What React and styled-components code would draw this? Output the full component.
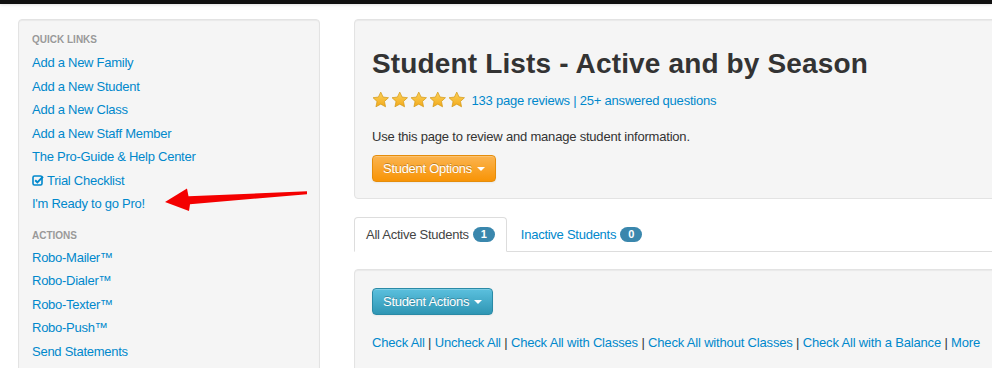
import React from "react";
import styled, { createGlobalStyle } from "styled-components";

const GlobalStyle = createGlobalStyle`
  html, body { margin: 0; padding: 0; background: #fff; overflow: hidden; }
  body {
    font-family: "Liberation Sans", Arial, Helvetica, sans-serif;
    font-size: 13px;
    color: #333;
  }
  * { box-sizing: border-box; }
`;

const Page = styled.div`
  position: relative;
  width: 992px;
  height: 368px;
  overflow: hidden;
`;

const TopBar = styled.div`
  height: 4px;
  background: #111;
  box-shadow: 0 1px 3px rgba(0, 0, 0, 0.12);
`;

const Layout = styled.div`
  display: flex;
  align-items: flex-start;
  gap: 34px;
  width: 1300px;
  padding: 15px 0 0 18px;
`;

const Well = styled.div`
  background: #f5f5f5;
  border: 1px solid #e3e3e3;
  border-radius: 4px;
  box-shadow: inset 0 1px 1px rgba(0, 0, 0, 0.05);
`;

const Sidebar = styled(Well)`
  width: 302px;
  height: 400px;
  padding: 10px 13px 0;
`;

const NavHeader = styled.div`
  font-size: 10px;
  font-weight: bold;
  line-height: 20px;
  color: #999;
  text-transform: uppercase;
  text-shadow: 0 1px 0 rgba(255, 255, 255, 0.5);
  margin-top: ${(p) => (p.$first ? "0" : "10px")};
  margin-bottom: ${(p) => (p.$first ? "1px" : "0")};
`;

const SideLink = styled.a`
  display: flex;
  align-items: center;
  gap: 3px;
  height: 23.5px;
  color: #0088cc;
  text-decoration: none;
  letter-spacing: -0.26px;
  font-size: 13px;
`;

const Main = styled.div`
  width: 940px;
  display: flex;
  flex-direction: column;
`;

const HeroWell = styled(Well)`
  padding: 19px 17px 16px;
`;

const Title = styled.h1`
  margin: 9px 0 0;
  font-size: 28px;
  line-height: 31px;
  font-weight: bold;
  color: #333;
  letter-spacing: 0.15px;
`;

const ReviewRow = styled.div`
  display: flex;
  align-items: center;
  height: 20px;
  margin-top: 11px;
  gap: 6px;
  letter-spacing: -0.22px;
`;

const Stars = styled.div`
  display: flex;
  gap: 1.5px;
`;

const Link = styled.a`
  color: #0088cc;
  text-decoration: none;
`;

const Description = styled.p`
  margin: 17px 0 0;
  line-height: 20px;
  letter-spacing: -0.2px;
`;

const Button = styled.button`
  display: inline-flex;
  align-items: center;
  gap: 5px;
  height: 27px;
  padding: 0 10px;
  margin-top: ${(p) => p.$mt || "0"};
  font-family: inherit;
  font-size: 13px;
  letter-spacing: -0.28px;
  color: #fff;
  text-shadow: 0 -1px 0 rgba(0, 0, 0, 0.25);
  border-radius: 4px;
  border: 1px solid ${(p) => (p.$variant === "info" ? "#2a8aa6" : "#e58d0b")};
  background: ${(p) =>
    p.$variant === "info"
      ? "linear-gradient(to bottom, #5bc0de, #2f96b4)"
      : "linear-gradient(to bottom, #fbb450, #f89406)"};
  box-shadow: inset 0 1px 0 rgba(255, 255, 255, 0.2), 0 1px 2px rgba(0, 0, 0, 0.05);
  align-self: flex-start;
`;

const Caret = styled.span`
  width: 0;
  height: 0;
  border-top: 4px solid #fff;
  border-left: 4px solid transparent;
  border-right: 4px solid transparent;
  margin-top: 1px;
`;

const Tabs = styled.ul`
  display: flex;
  list-style: none;
  margin: 18px 0 0;
  padding: 0;
  border-bottom: 1px solid #ddd;
`;

const Tab = styled.li`
  margin-bottom: -1px;
  margin-right: 2px;
`;

const TabLink = styled.a`
  display: flex;
  align-items: center;
  gap: 4px;
  padding: 8px 11px 8px 11px;
  line-height: 17px;
  border: 1px solid ${(p) => (p.$active ? "#ddd" : "transparent")};
  border-bottom-color: ${(p) => (p.$active ? "#fff" : "transparent")};
  border-radius: 4px 4px 0 0;
  background: ${(p) => (p.$active ? "#fff" : "transparent")};
  color: ${(p) => (p.$active ? "#444" : "#0088cc")};
  text-decoration: none;
  letter-spacing: -0.26px;
`;

const Badge = styled.span`
  display: inline-block;
  padding: 0 8px;
  line-height: 15px;
  border-radius: 9px;
  background: #3a87ad;
  color: #fff;
  font-size: 11px;
  font-weight: bold;
  letter-spacing: 0;
`;

const ListWell = styled(Well)`
  margin-top: 17px;
  height: 120px;
  padding: 18px 17px;
  display: flex;
  flex-direction: column;
`;

const CheckRow = styled.div`
  margin-top: 19px;
  line-height: 18px;
  letter-spacing: -0.17px;
`;

const Sep = styled.span`
  color: #333;
`;

const ArrowLayer = styled.svg`
  position: absolute;
  left: 0;
  top: 0;
  pointer-events: none;
`;

const Star = () => (
  <svg width="17.5" height="17.5" viewBox="0 0 24 24">
    <defs>
      <linearGradient id="sg" x1="0" y1="0" x2="0" y2="1">
        <stop offset="0" stopColor="#fcd25a" />
        <stop offset="1" stopColor="#f2a91b" />
      </linearGradient>
    </defs>
    <polygon
      points="12,1.5 15.2,8.3 22.6,9.2 17.1,14.3 18.6,21.7 12,18 5.4,21.7 6.9,14.3 1.4,9.2 8.8,8.3"
      fill="url(#sg)"
      stroke="#d39a1a"
      strokeWidth="1"
      strokeLinejoin="round"
    />
  </svg>
);

const CheckIcon = () => (
  <svg width="12" height="12" viewBox="0 0 12 12">
    <rect x="1" y="2" width="9" height="9" rx="1.5" fill="none" stroke="#0088cc" strokeWidth="1.6" />
    <path d="M3.2 6.2 L5.4 8.4 L11 2.6" fill="none" stroke="#0088cc" strokeWidth="2" />
  </svg>
);

const quickLinks = [
  "Add a New Family",
  "Add a New Student",
  "Add a New Class",
  "Add a New Staff Member",
  "The Pro-Guide & Help Center",
];

const actions = ["Robo-Mailer™", "Robo-Dialer™", "Robo-Texter™", "Robo-Push™", "Send Statements"];

const checkLinks = [
  "Check All",
  "Uncheck All",
  "Check All with Classes",
  "Check All without Classes",
  "Check All with a Balance",
  "More",
];

export default function App() {
  return (
    <Page>
      <GlobalStyle />
      <TopBar />
      <Layout>
        <Sidebar>
          <NavHeader $first>Quick Links</NavHeader>
          {quickLinks.map((l) => (
            <SideLink key={l} href="#">{l}</SideLink>
          ))}
          <SideLink href="#">
            <CheckIcon />
            Trial Checklist
          </SideLink>
          <SideLink href="#">I'm Ready to go Pro!</SideLink>
          <NavHeader>Actions</NavHeader>
          {actions.map((l) => (
            <SideLink key={l} href="#">{l}</SideLink>
          ))}
        </Sidebar>
        <Main>
          <HeroWell>
            <Title>Student Lists - Active and by Season</Title>
            <ReviewRow>
              <Stars>
                {[0, 1, 2, 3, 4].map((i) => (
                  <Star key={i} />
                ))}
              </Stars>
              <Link href="#">133 page reviews | 25+ answered questions</Link>
            </ReviewRow>
            <Description>Use this page to review and manage student information.</Description>
            <Button $mt="8px">
              Student Options <Caret />
            </Button>
          </HeroWell>
          <Tabs>
            <Tab>
              <TabLink $active href="#">
                All Active Students <Badge>1</Badge>
              </TabLink>
            </Tab>
            <Tab>
              <TabLink href="#">
                Inactive Students <Badge>0</Badge>
              </TabLink>
            </Tab>
          </Tabs>
          <ListWell>
            <Button $variant="info">
              Student Actions <Caret />
            </Button>
            <CheckRow>
              {checkLinks.map((l, i) => (
                <React.Fragment key={l}>
                  {i > 0 && <Sep> | </Sep>}
                  <Link href="#">{l}</Link>
                </React.Fragment>
              ))}
            </CheckRow>
          </ListWell>
        </Main>
      </Layout>
      <ArrowLayer width="330" height="230" viewBox="0 0 330 230">
        <polygon
          points="165,202 187,188.5 188.5,196.3 307,191.3 307,194.2 190,204.2 189,211"
          fill="#f40000"
        />
      </ArrowLayer>
    </Page>
  );
}
